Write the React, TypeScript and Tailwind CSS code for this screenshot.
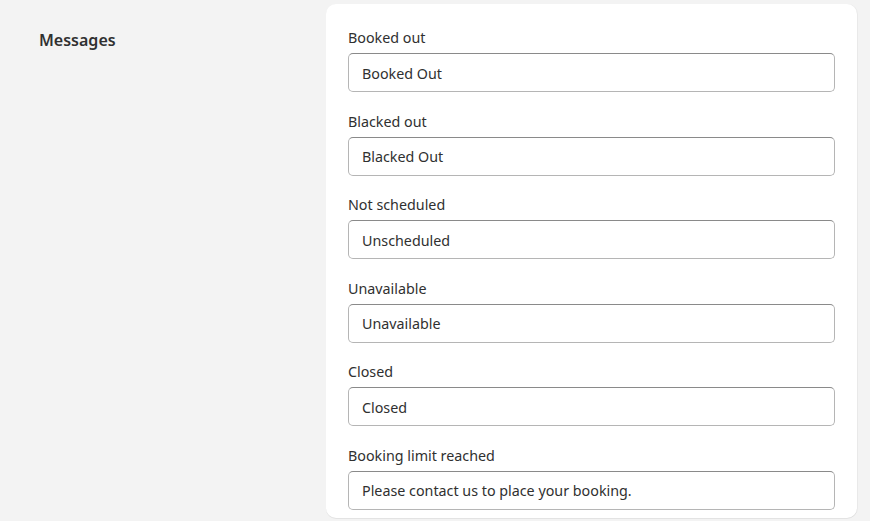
const fields = [
  { label: 'Booked out', value: 'Booked Out' },
  { label: 'Blacked out', value: 'Blacked Out' },
  { label: 'Not scheduled', value: 'Unscheduled' },
  { label: 'Unavailable', value: 'Unavailable' },
  { label: 'Closed', value: 'Closed' },
  { label: 'Booking limit reached', value: 'Please contact us to place your booking.' },
]

export default function App() {
  return (
    <div
      className="h-[521px] w-[870px] overflow-hidden bg-[#f3f3f3] text-[#303030]"
      style={{ fontFamily: '"Noto Sans", "Open Sans", sans-serif' }}
    >
      <div className="flex pt-[4px]">
        {/* Section title */}
        <div className="w-[326px] shrink-0 pl-[39px] pt-[24px]">
          <h2 className="text-[16px] leading-6 font-semibold">Messages</h2>
        </div>

        {/* Card with fields */}
        <div className="w-[531px] rounded-[10px] bg-white px-[22px] pt-[24px] pb-[8px] shadow-[0_1px_0_rgba(26,26,26,0.07),1px_0_0_rgba(0,0,0,0.04)]">
          <div className="flex flex-col gap-[19.6px]">
            {fields.map(f => (
              <div key={f.label}>
                <label className="block text-[14.3px] leading-5 mb-[5px]">{f.label}</label>
                <input
                  readOnly
                  value={f.value}
                  className="block h-[39px] w-full rounded-[5px] border border-[#b5b5b5] border-t-[#8a8a8a] bg-white px-[13px] pt-[1px] text-[14.3px] text-[#303030] outline-none"
                />
              </div>
            ))}
          </div>
        </div>
      </div>
    </div>
  )
}
